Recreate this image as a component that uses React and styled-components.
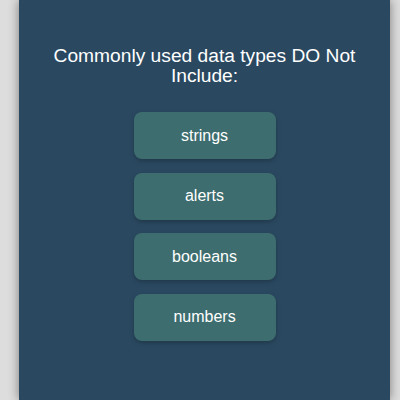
import React from "react";
import styled, { createGlobalStyle } from "styled-components";

const Global = createGlobalStyle`
  html, body { margin: 0; padding: 0; height: 100%; }
  body {
    background: #dddddd;
    font-family: "Liberation Sans", Arial, sans-serif;
    overflow: hidden;
  }
`;

const Panel = styled.div`
  margin-left: 19px;
  width: 371px;
  min-height: 400px;
  background: #2a4961;
  box-shadow: 0 0 10px rgba(0, 0, 0, 0.45);
  padding-top: 46px;
  box-sizing: border-box;
  display: flex;
  flex-direction: column;
  align-items: center;
`;

const Title = styled.h2`
  margin: 0 0 26px;
  width: 320px;
  font-size: 19.2px;
  line-height: 20px;
  font-weight: normal;
  color: #ffffff;
  text-align: center;
`;

const Options = styled.div`
  display: flex;
  flex-direction: column;
  gap: 13.67px;
`;

const Option = styled.button`
  width: 142px;
  height: 47px;
  border: none;
  border-radius: 8px;
  background: #3d6d6e;
  color: #ffffff;
  font-family: "Liberation Sans", Arial, sans-serif;
  font-size: 16px;
  box-shadow: 0 2px 5px rgba(0, 0, 0, 0.25);
  cursor: pointer;
`;

const options = ["strings", "alerts", "booleans", "numbers"];

export default function App() {
  return (
    <>
      <Global />
      <Panel>
        <Title>Commonly used data types DO Not Include:</Title>
        <Options>
          {options.map((o) => (
            <Option key={o}>{o}</Option>
          ))}
        </Options>
      </Panel>
    </>
  );
}
